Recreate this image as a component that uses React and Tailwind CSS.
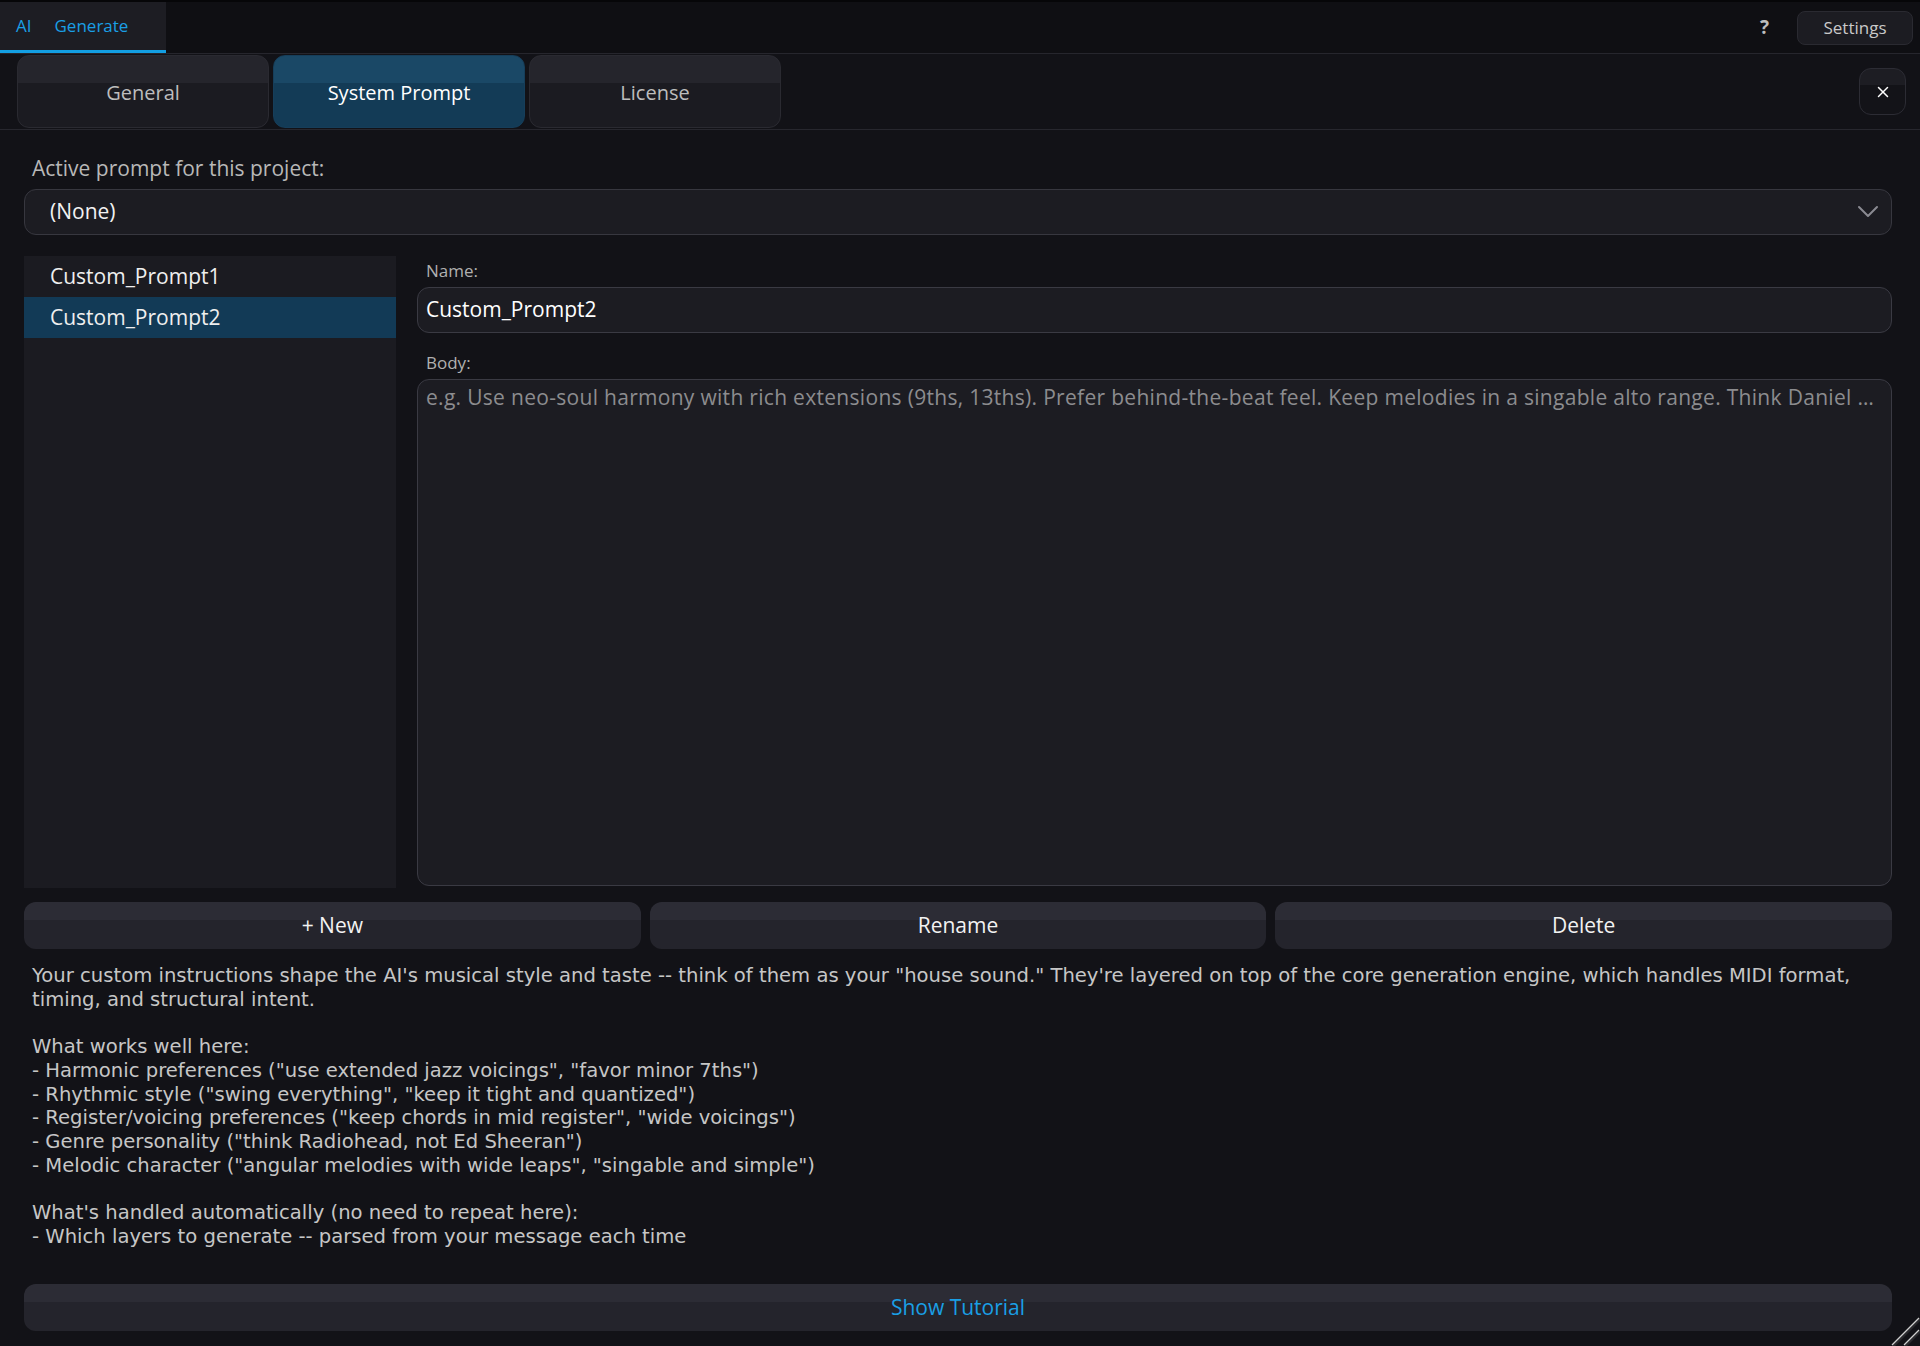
import { X } from "lucide-react";

const tabs = ["General", "System Prompt", "License"];
const prompts = ["Custom_Prompt1", "Custom_Prompt2"];

const helpLines = [
  'Your custom instructions shape the AI\'s musical style and taste -- think of them as your "house sound." They\'re layered on top of the core generation engine, which handles MIDI format,',
  "timing, and structural intent.",
  "",
  "What works well here:",
  '- Harmonic preferences ("use extended jazz voicings", "favor minor 7ths")',
  '- Rhythmic style ("swing everything", "keep it tight and quantized")',
  '- Register/voicing preferences ("keep chords in mid register", "wide voicings")',
  '- Genre personality ("think Radiohead, not Ed Sheeran")',
  '- Melodic character ("angular melodies with wide leaps", "singable and simple")',
  "",
  "What's handled automatically (no need to repeat here):",
  "- Which layers to generate -- parsed from your message each time",
];

function Chevron() {
  return (
    <svg width="22" height="14" viewBox="0 0 22 14" fill="none">
      <path d="M2 2l9 9 9-9" stroke="#8a8a92" strokeWidth="2" strokeLinecap="round" strokeLinejoin="round" />
    </svg>
  );
}

function ResizeGrip() {
  return (
    <svg width="30" height="30" viewBox="0 0 30 30" className="absolute right-0 bottom-0">
      <path d="M3 30L30 3" stroke="#2a2a2e" strokeWidth="3" />
      <path d="M2 29L29 2" stroke="#cfcfcf" strokeWidth="1.3" />
      <path d="M15 30L30 15" stroke="#2a2a2e" strokeWidth="3" />
      <path d="M14 29L29 14" stroke="#cfcfcf" strokeWidth="1.3" />
    </svg>
  );
}

function ActionButton({ children, className = "" }) {
  return (
    <button
      className={`h-[47px] rounded-[12px] bg-[linear-gradient(to_bottom,#2c2c35_0,#2c2c35_38%,#24242c_38%,#24242c_100%)] text-[21px] ${className}`}
    >
      {children}
    </button>
  );
}

export default function App() {
  return (
    <div className="relative flex h-[1346px] w-[1920px] flex-col overflow-hidden bg-[#121217] font-['Open_Sans',sans-serif]">
      {/* window title bar */}
      <header className="flex h-[54px] shrink-0 items-stretch border-t-[2px] border-b border-t-[#060608] border-b-[#26262d] bg-[#0f0f13]">
        <div className="flex w-[166px] items-center gap-[23px] border-b-[3px] border-[#139fe3] bg-[#1d1d23] pl-[16px] text-[17px] text-[#1a9fe5]">
          <span>AI</span>
          <span>Generate</span>
        </div>
        <div className="flex-1" />
        <div className="flex items-center gap-[28px] pr-[7px]">
          <span className="text-[19px] font-bold text-[#bdbdbd]">?</span>
          <button className="h-[34px] w-[116px] rounded-[8px] border border-[#2a2a31] bg-[#1c1c22] text-[17px] text-[#c9c9c9]">
            Settings
          </button>
        </div>
      </header>

      {/* settings tabs */}
      <div className="flex h-[76px] shrink-0 items-start border-b border-[#27272e] pl-[17px] pr-[14px] pt-[1px]">
        <div className="flex gap-[4px]">
          {tabs.map((t) => {
            const active = t === "System Prompt";
            return (
              <div
                key={t}
                className={`flex h-[73px] w-[252px] items-center justify-center rounded-[12px] border pt-[2px] text-[20px] ${
                  active
                    ? "border-[#163e5a] bg-[linear-gradient(to_bottom,#1a4866_0,#1a4866_38%,#133b56_38%,#133b56_100%)] text-white"
                    : "border-[#2a2a31] bg-[linear-gradient(to_bottom,#25252c_0,#25252c_38%,#1b1b21_38%,#1b1b21_100%)] text-[#bdbdbd]"
                }`}
              >
                {t}
              </div>
            );
          })}
        </div>
        <div className="flex-1" />
        <button className="mt-[13px] flex h-[47px] w-[47px] items-center justify-center rounded-[12px] border border-[#2c2c34] bg-[linear-gradient(to_bottom,#1d1d23_0,#1d1d23_35%,#131318_35%,#131318_100%)] text-white">
          <X size={18} strokeWidth={2} />
        </button>
      </div>

      {/* system prompt page */}
      <main className="flex min-w-0 flex-1 flex-col pl-[24px] pr-[28px] pt-[24px]">
        <div className="h-[28px] pl-[8px] text-[21px] leading-[28px] text-[#b8b8b8]">Active prompt for this project:</div>

        <div className="mt-[7px] flex h-[46px] items-center justify-between rounded-[12px] border border-[#37373f] bg-[#1c1c22] pl-[25px] pr-[12px]">
          <span className="text-[21px] text-[#f2f2f2]">(None)</span>
          <Chevron />
        </div>

        <div className="mt-[21px] flex gap-[21px]">
          <div className="h-[632px] w-[372px] shrink-0 bg-[#1b1b21]">
            {prompts.map((p) => (
              <div
                key={p}
                className={`flex h-[41px] items-center pl-[26px] text-[21px] text-[#efefef] ${
                  p === "Custom_Prompt2" ? "bg-[#123a56]" : ""
                }`}
              >
                {p}
              </div>
            ))}
          </div>

          <div className="flex min-w-0 flex-1 flex-col pt-[4px]">
            <div className="pl-[9px] text-[17px] leading-[22px] text-[#b0b0b0]">Name:</div>
            <div className="mt-[5px] flex h-[46px] items-center rounded-[12px] border border-[#3a3a43] bg-[#1c1c22] pl-[8px] text-[21px] text-white">
              Custom_Prompt2
            </div>
            <div className="mt-[19px] pl-[9px] text-[17px] leading-[22px] text-[#b0b0b0]">Body:</div>
            <div className="mt-[5px] h-[507px] min-w-0 rounded-[12px] border border-[#3a3a43] bg-[#1c1c22] pl-[8px] pr-[14px] pt-[3px]">
              <div className="truncate text-[21px] leading-[28px] tracking-[0.3px] text-[#8c8c8f]">
                e.g. Use neo-soul harmony with rich extensions (9ths, 13ths). Prefer behind-the-beat feel. Keep melodies in a singable alto range. Think Daniel Caesar, H.E.R., and Frank Ocean for tone and texture.
              </div>
            </div>
          </div>
        </div>

        <div className="mt-[14px] grid grid-cols-3 gap-[9px] text-[#f2f2f2]">
          <ActionButton>+ New</ActionButton>
          <ActionButton>Rename</ActionButton>
          <ActionButton>Delete</ActionButton>
        </div>

        <div className="mt-[15px] pl-[8px] font-['DejaVu_Sans',sans-serif] text-[19.6px] leading-[23.7px] text-[#c6c6c6]">
          {helpLines.map((line, i) =>
            line ? (
              <div key={i} className="whitespace-nowrap">
                {line}
              </div>
            ) : (
              <div key={i} className="h-[23.7px]" />
            )
          )}
        </div>

        <div className="flex-1" />
        <ActionButton className="mb-[15px] w-full text-[#1a9fe5]">Show Tutorial</ActionButton>
      </main>

      <ResizeGrip />
    </div>
  );
}
